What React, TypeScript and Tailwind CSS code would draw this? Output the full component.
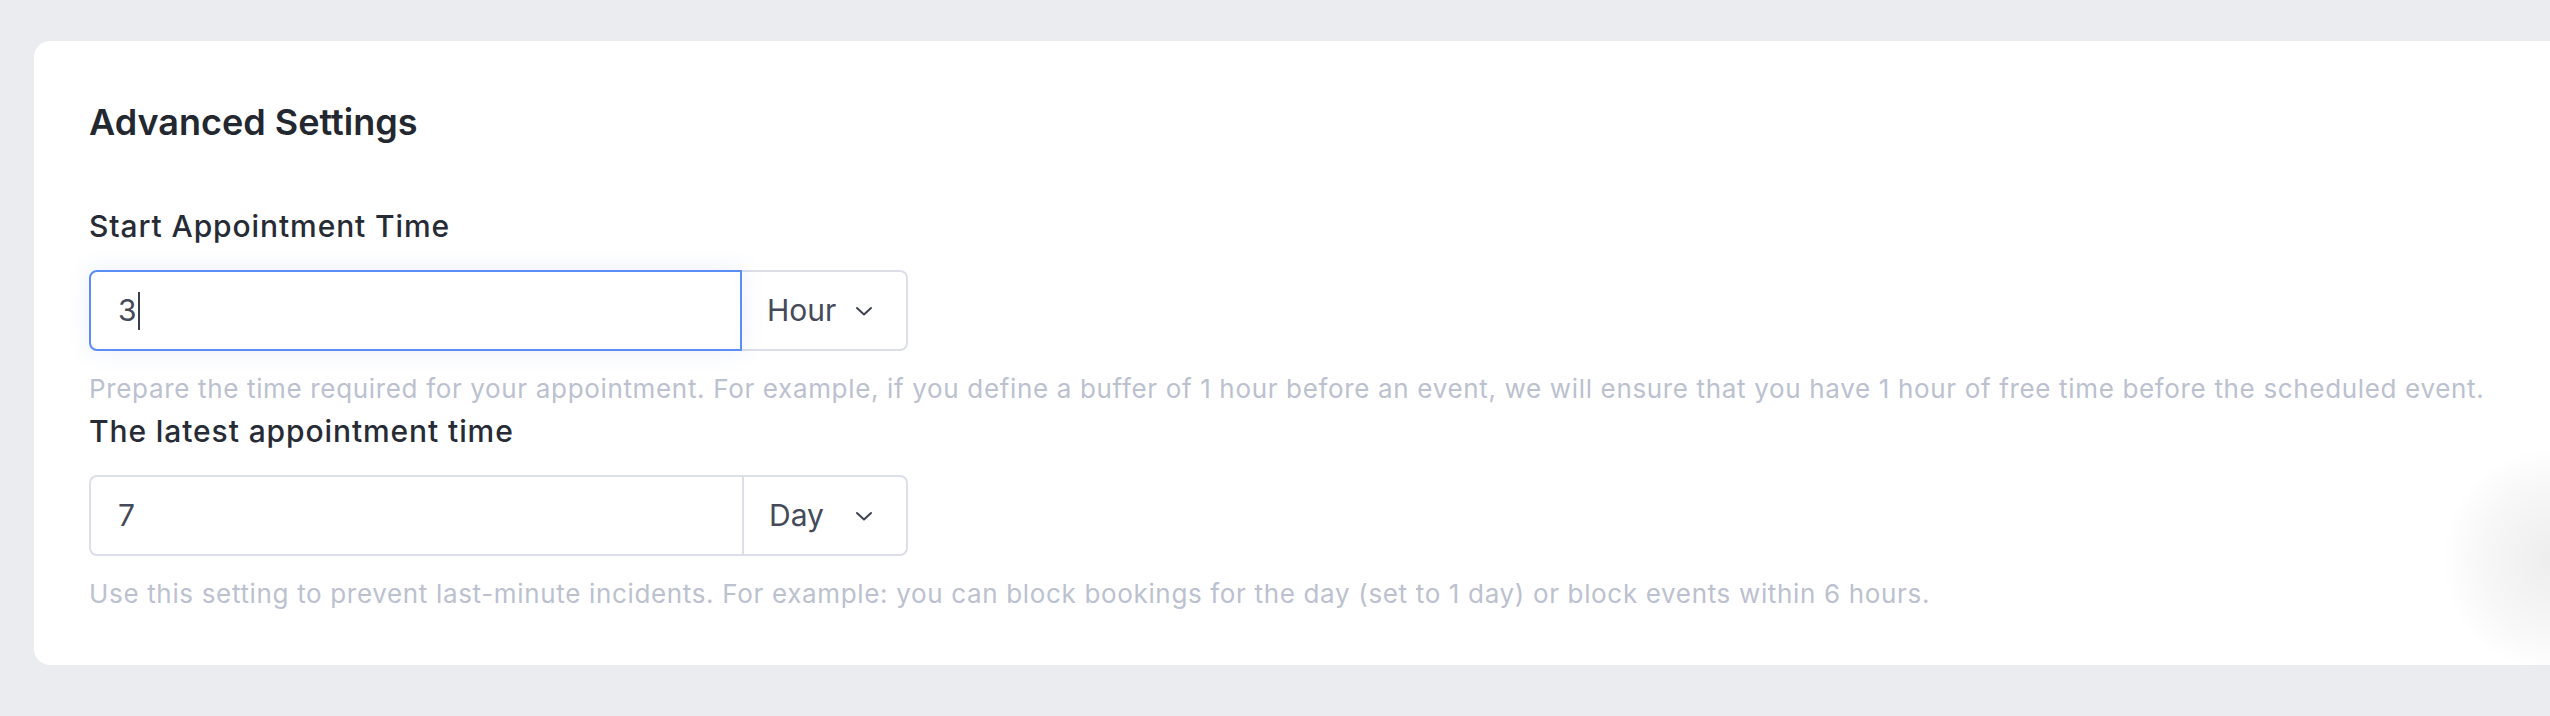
import React from "react";

function Chevron() {
  return (
    <svg width="20" height="12" viewBox="0 0 20 12" fill="none" className="shrink-0">
      <path d="M3 3 L10 9.5 L17 3" stroke="#3f4452" strokeWidth="2" strokeLinecap="round" strokeLinejoin="round" />
    </svg>
  );
}

function Field({
  label,
  value,
  unit,
  focused,
  help,
}: {
  label: string;
  value: string;
  unit: string;
  focused?: boolean;
  help: string;
}) {
  return (
    <div className="flex flex-col">
      <div className="text-[30px] leading-[40px] font-medium tracking-[0.9px] text-[#272b35]">{label}</div>
      <div className="mt-[24px] flex h-[81px] w-[819px]">
        <div
          className={
            focused
              ? "flex w-[653px] items-center rounded-l-[8px] border-2 border-[#5b8df5] bg-white pl-[27px] shadow-[0_0_24px_rgba(91,120,220,0.12)] z-10"
              : "flex w-[653px] items-center rounded-l-[8px] border-2 border-r-0 border-[#dcdfe8] bg-white pl-[27px]"
          }
        >
          <span className="text-[30px] text-[#454a58]">{value}</span>
          {focused && <span className="ml-[1px] h-[38px] w-[2px] bg-[#3a3f4c]" />}
        </div>
        <div
          className={
            focused
              ? "flex flex-1 items-center justify-between rounded-r-[8px] border-2 border-l-0 border-[#dcdfe8] bg-white pl-[25px] pr-[32px]"
              : "flex flex-1 items-center justify-between rounded-r-[8px] border-2 border-[#dcdfe8] bg-white pl-[25px] pr-[32px]"
          }
        >
          <span className="text-[30px] text-[#454a58]">{unit}</span>
          <Chevron />
        </div>
      </div>
      <div className="mt-[20px] text-[26px] leading-[36px] text-[#bcc1cf] tracking-[0.66px]">{help}</div>
    </div>
  );
}

export default function App() {
  return (
    <div
      className="relative h-[716px] w-[2550px] overflow-hidden bg-[#ebecf0] pl-[34px] pt-[41px]"
      style={{ fontFamily: "Inter, 'Noto Sans', 'Liberation Sans', sans-serif" }}
    >
      <div className="flex h-[624px] w-[2540px] flex-col rounded-[16px] bg-white pl-[55px] pt-[59px]">
        <h2 className="text-[36px] leading-[44px] font-semibold text-[#232730]">Advanced Settings</h2>
        <div className="mt-[62px] flex flex-col gap-[4px]">
          <Field
            label="Start Appointment Time"
            value="3"
            unit="Hour"
            focused
            help="Prepare the time required for your appointment. For example, if you define a buffer of 1 hour before an event, we will ensure that you have 1 hour of free time before the scheduled event."
          />
          <Field
            label="The latest appointment time"
            value="7"
            unit="Day"
            help="Use this setting to prevent last-minute incidents. For example: you can block bookings for the day (set to 1 day) or block events within 6 hours."
          />
        </div>
      </div>
      <div className="absolute right-[-120px] top-[445px] h-[230px] w-[230px] rounded-full bg-[radial-gradient(circle,rgba(0,0,0,0.07),rgba(0,0,0,0.03)_45%,transparent_70%)]" />
    </div>
  );
}
